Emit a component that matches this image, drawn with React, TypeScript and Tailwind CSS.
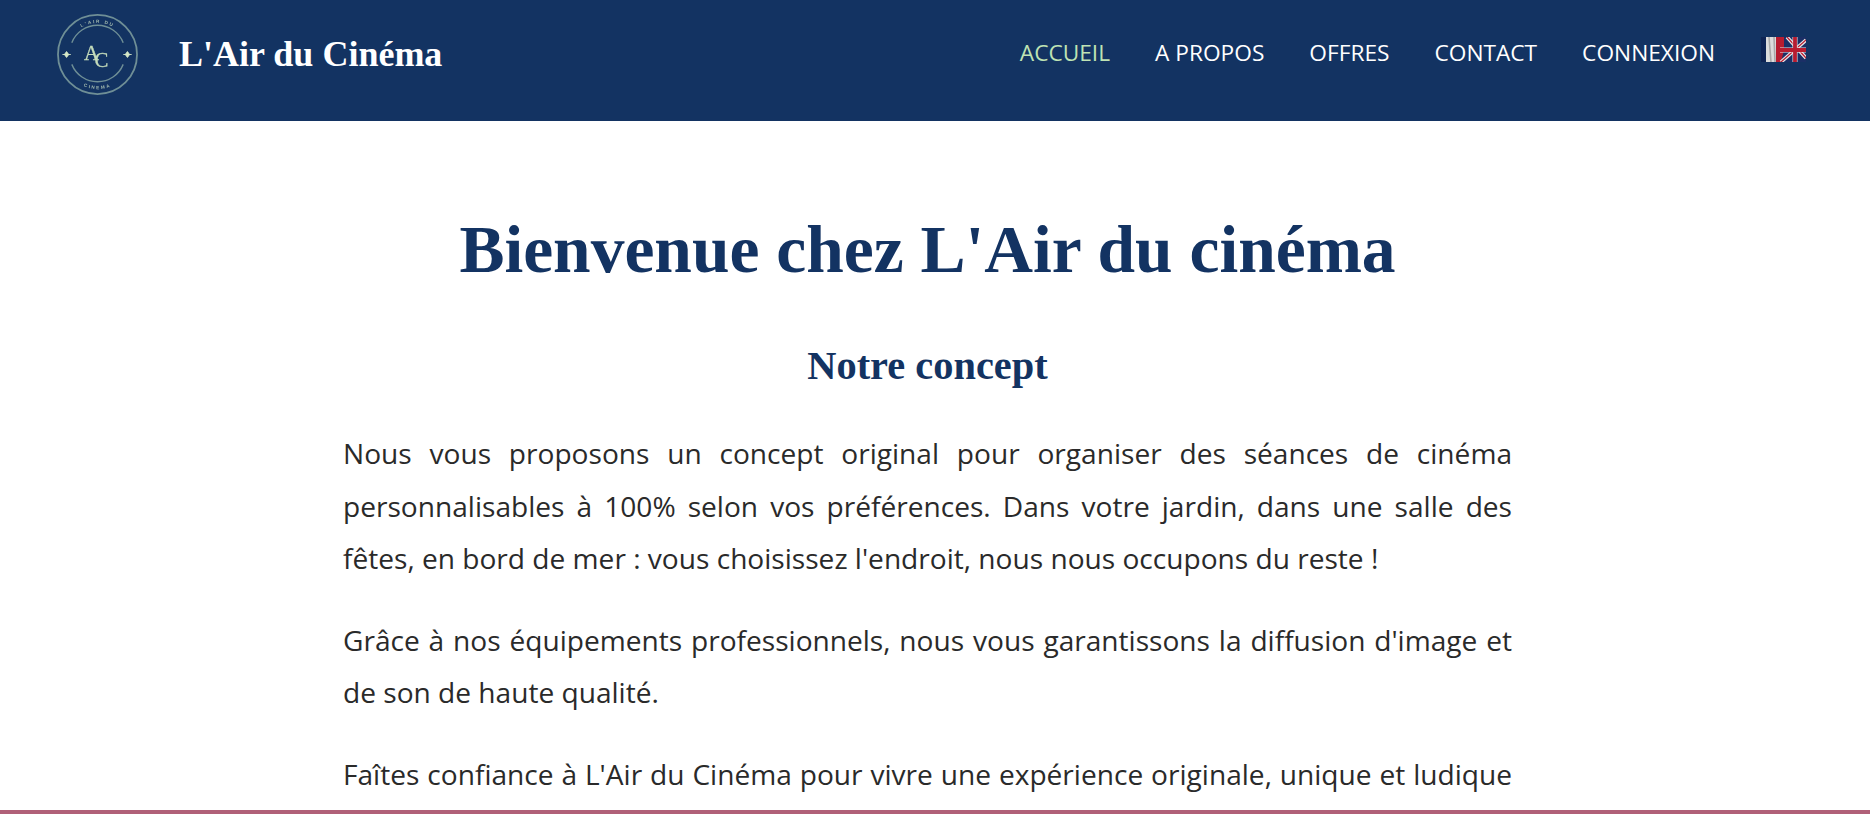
import { useId } from "react";

const navLinks = ["ACCUEIL", "A PROPOS", "OFFRES", "CONTACT", "CONNEXION"];

function Logo() {
  const id = useId();
  const top = `${id}-top`;
  const bottom = `${id}-bottom`;
  return (
    <svg viewBox="0 0 84 84" className="w-[83px] h-[83px] shrink-0 blur-[0.4px]" fill="none" stroke="#6f8f96">
      <defs>
        <path id={top} d="M 10 42 A 32 32 0 0 1 74 42" />
        <path id={bottom} d="M 7 42 A 35 35 0 0 0 77 42" />
      </defs>
      <circle cx="42" cy="42" r="40" strokeWidth="1.8" />
      <path d="M 16 30 A 28 28 0 0 1 68 30" strokeWidth="1.4" />
      <path d="M 16 52 A 28 28 0 0 0 68 52" strokeWidth="1.4" />
      <path d="M 8.5 42 l 2.2 -3 l 2.2 3 l -2.2 3 z M 6.5 42 h 8.5" fill="#d6e8c8" stroke="#d6e8c8" strokeWidth="0.9" />
      <path d="M 70.1 42 l 2.2 -3 l 2.2 3 l -2.2 3 z M 68.1 42 h 8.5" fill="#d6e8c8" stroke="#d6e8c8" strokeWidth="0.9" />
      <text x="36" y="48" fontFamily="Liberation Serif, serif" fontSize="21" fill="#c5dcbb" stroke="#c5dcbb" strokeWidth="0.3" textAnchor="middle">A</text>
      <text x="46" y="55" fontFamily="Liberation Serif, serif" fontSize="21" fill="#c5dcbb" stroke="#c5dcbb" strokeWidth="0.3" textAnchor="middle">C</text>
      <text fontFamily="Liberation Sans, sans-serif" fontSize="4.6" fontWeight="700" letterSpacing="1.8" fill="#a5bcb0" stroke="none">
        <textPath href={`#${top}`} startOffset="50%" textAnchor="middle">L'AIR DU</textPath>
      </text>
      <text fontFamily="Liberation Sans, sans-serif" fontSize="4.6" fontWeight="700" letterSpacing="1.8" fill="#a5bcb0" stroke="none">
        <textPath href={`#${bottom}`} startOffset="50%" textAnchor="middle">CINEMA</textPath>
      </text>
    </svg>
  );
}

// drapeau FR/UK, flou comme la petite image d'origine
function LangFlag() {
  return (
    <svg viewBox="0 0 45 25" className="w-[45px] h-[25px] -mt-2 ml-[1px] blur-[0.5px]" preserveAspectRatio="none">
      <rect x="0" width="5" height="25" fill="#0e2454" />
      <rect x="5" width="11" height="25" fill="#dcdcdc" />
      <path d="M8 0 L10 25 M13 0 L14 25" stroke="#a9a9a9" strokeWidth="1.6" />
      <rect x="15" width="8" height="25" fill="#b81c30" />
      <path d="M23 0 H45 V25 H20 L23 13 Z" fill="#1b2f66" />
      <path d="M20 25 L45 3 M26 0 L45 21" stroke="#e8e8e8" strokeWidth="3.6" />
      <path d="M20 25 L45 3 M26 0 L45 21" stroke="#b81c30" strokeWidth="1.2" />
      <path d="M34 0 V25 M19 13 H45" stroke="#e8e8e8" strokeWidth="5" />
      <path d="M34 0 V25 M19 13 H45" stroke="#b81c30" strokeWidth="3.8" />
    </svg>
  );
}

export default function App() {
  return (
    <div className="h-screen flex flex-col overflow-hidden bg-white">
      <header className="h-[121px] shrink-0 bg-[#133362] flex items-center justify-between pl-14 pr-[64px]">
        <div className="flex items-center gap-10 -mt-[13px]">
          <Logo />
          <span className="text-[36px] font-bold text-white font-['Liberation_Serif',serif]">L'Air du Cinéma</span>
        </div>
        <nav className="flex items-center gap-[45px] -mt-[14px] font-['Open_Sans',sans-serif] text-[22.7px]">
          {navLinks.map((label, i) => (
            <a key={label} href="#" className={i === 0 ? "text-[#bfe3b4]" : "text-white"}>
              {label}
            </a>
          ))}
          <LangFlag />
        </nav>
      </header>

      <main className="flex-1 min-h-0 overflow-hidden pr-[15px]">
        <div className="w-[1169px] mx-auto pt-[90px]">
          <h1 className="text-center text-[67.5px] leading-[78px] font-bold text-[#133362] font-['Liberation_Serif',serif]">
            Bienvenue chez L'Air du cinéma
          </h1>
          <h2 className="mt-[54px] text-center text-[40.4px] leading-[46px] font-bold text-[#133362] font-['Liberation_Serif',serif]">
            Notre concept
          </h2>
          <div className="mt-[38px] font-['Open_Sans',sans-serif] text-[28.1px] leading-[52.5px] text-[#2a2a2a] text-justify">
            <p>
              Nous vous proposons un concept original pour organiser des séances de cinéma personnalisables à 100% selon vos préférences. Dans votre jardin, dans une salle des fêtes, en bord de mer : vous choisissez l'endroit, nous nous occupons du reste !
            </p>
            <p className="mt-[29px]">
              Grâce à nos équipements professionnels, nous vous garantissons la diffusion d'image et de son de haute qualité.
            </p>
            <p className="mt-[29px]">
              Faîtes confiance à L'Air du Cinéma pour vivre une expérience originale, unique et ludique entre amis ou en famille.
            </p>
          </div>
        </div>
      </main>

      <div className="h-[4px] shrink-0 bg-[#b06078]" />
    </div>
  );
}
